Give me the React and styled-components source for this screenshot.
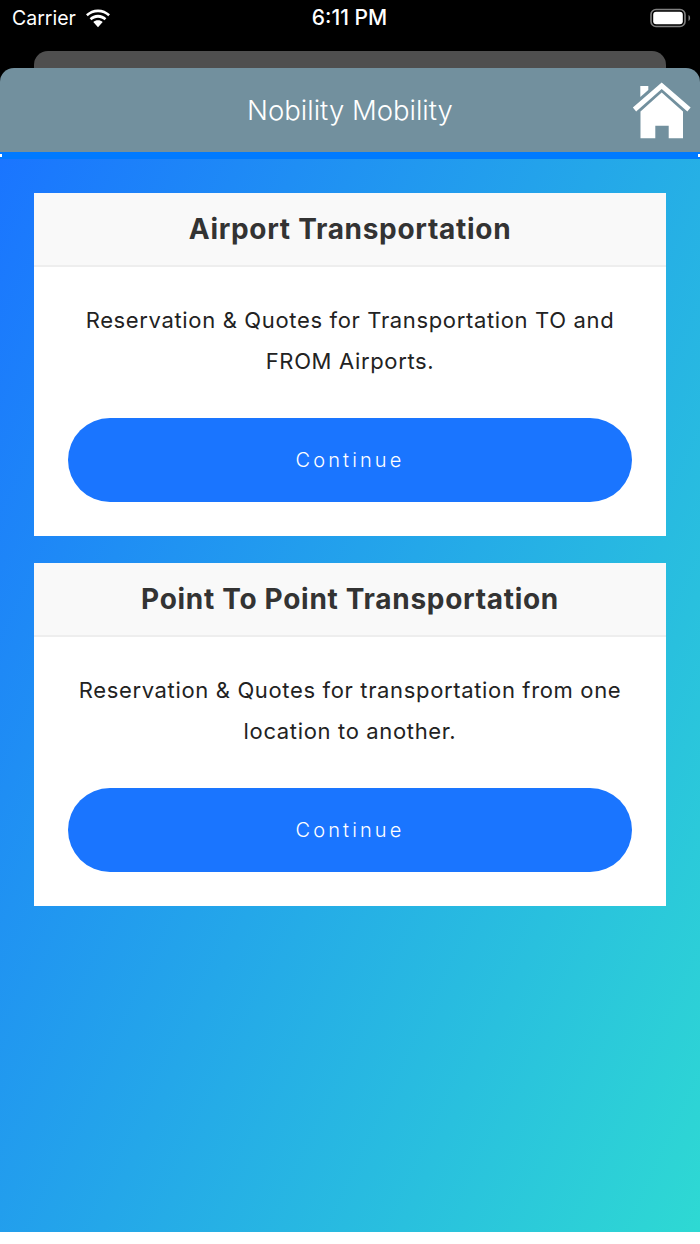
import React from "react";
import styled, { createGlobalStyle } from "styled-components";

const GlobalStyle = createGlobalStyle`
  html, body {
    margin: 0;
    padding: 0;
    background: #fff;
  }
  * {
    box-sizing: border-box;
  }
`;

const Phone = styled.div`
  width: 700px;
  height: 1232px;
  display: flex;
  flex-direction: column;
  background: #000;
  overflow: hidden;
`;

const StatusBar = styled.div`
  height: 51px;
  flex: none;
  display: grid;
  grid-template-columns: 1fr auto 1fr;
  align-items: start;
  padding: 6px 9px 0 12px;
  color: #fff;
  font-family: Inter, "Liberation Sans", sans-serif;
`;

const Carrier = styled.div`
  display: flex;
  align-items: center;
  gap: 9px;
  font-size: 19.5px;
  line-height: 24px;
`;

const Clock = styled.div`
  font-size: 21px;
  font-weight: 500;
  line-height: 24px;
  margin-right: 4px;
`;

const Battery = styled.div`
  justify-self: end;
  display: flex;
  height: 24px;
  align-items: center;
`;

const BackSheet = styled.div`
  height: 17px;
  flex: none;
  margin: 0 34px;
  background: #4f4f4f;
  border-radius: 14px 14px 0 0;
`;

const NavBar = styled.header`
  height: 84px;
  flex: none;
  position: relative;
  display: flex;
  align-items: center;
  justify-content: center;
  background: #72909e;
  border-radius: 14px 14px 0 0;
  color: #fff;
  font-family: Inter, "Liberation Sans", sans-serif;
  font-size: 27.5px;
  font-weight: 300;
`;

const HomeButton = styled.div`
  position: absolute;
  right: 8px;
  top: 14px;
  line-height: 0;
`;

const Strip = styled.div`
  height: 7px;
  flex: none;
  position: relative;
  background: #007aff;

  &::before,
  &::after {
    content: "";
    position: absolute;
    top: 2px;
    width: 2px;
    height: 3px;
    background: #fff;
  }
  &::before {
    left: 0;
  }
  &::after {
    right: 0;
  }
`;

const Content = styled.main`
  flex: 1;
  display: flex;
  flex-direction: column;
  gap: 27px;
  padding: 34px 34px 0;
  background: linear-gradient(115deg, #1a75ff 0%, #2ed9d3 100%);
`;

const Card = styled.section`
  background: #fff;
  font-family: Inter, "Noto Sans", sans-serif;
`;

const CardHeader = styled.div`
  height: 74px;
  display: flex;
  align-items: center;
  justify-content: center;
  background: #f9f9f9;
  border-bottom: 2px solid #eeeeee;
  color: #333;
  font-size: 28px;
  font-weight: 700;
  letter-spacing: 0.7px;
`;

const CardBody = styled.div`
  padding: 33px 34px 34px;
  display: flex;
  flex-direction: column;
  align-items: center;
`;

const CardText = styled.p`
  margin: 0 -20px 36px;
  text-align: center;
  font-size: 22px;
  line-height: 41px;
  letter-spacing: 0.65px;
  color: #222;
  white-space: pre-line;
`;

const ContinueButton = styled.button`
  width: 100%;
  height: 84px;
  border: 0;
  border-radius: 42px;
  background: #1a75ff;
  color: #fff;
  font-family: inherit;
  font-size: 20px;
  font-weight: 300;
  letter-spacing: 3.1px;
`;

const WifiIcon = () => (
  <svg width="26" height="19" viewBox="0 0 26 19.800">
    <path d="M13 3.400c4.200 0 8 1.600 10.700 4.200l1.800-2C22.200 2.400 17.800.4 13 .4S3.800 2.400.5 5.600l1.800 2C5 5 8.800 3.400 13 3.400z" fill="#fff" />
    <path d="M13 9c2.600 0 5 1 6.800 2.600l1.900-2C19.400 7.400 16.400 6 13 6S6.600 7.400 4.300 9.600l1.900 2C8 10 10.400 9 13 9z" fill="#fff" />
    <path d="M13 11.700c-1.900 0-3.600.7-4.900 1.900L13 19l4.900-5.400c-1.300-1.200-3-1.900-4.900-1.900z" fill="#fff" />
  </svg>
);

const BatteryIcon = () => (
  <svg width="42" height="20" viewBox="0 0 42 20">
    <rect x="2" y="1.500" width="34" height="17" rx="5" fill="none" stroke="#808080" strokeWidth="1.600" />
    <rect x="4.200" y="3.800" width="29.600" height="12.400" rx="3" fill="#fff" />
    <path d="M39.500 7v6c1-.4 1.600-1.600 1.600-3s-.6-2.600-1.600-3z" fill="#808080" />
  </svg>
);

const HomeIcon = () => (
  <svg width="60" height="58" viewBox="0 0 60 58">
    <path d="M8.500 29.500L29.700 10.500 51 29.500V56.300H36.700V43.700H23.300V56.300H8.500z" fill="#fff" />
    <path d="M8.300 4H16.300V8L8.300 15z" fill="#fff" />
    <path d="M2.500 27.500L29.700 3.700 57 27.500" fill="none" stroke="#fff" strokeWidth="5" />
  </svg>
);

const cards = [
  {
    title: "Airport Transportation",
    text: "Reservation & Quotes for Transportation TO and\nFROM Airports.",
  },
  {
    title: "Point To Point Transportation",
    text: "Reservation & Quotes for transportation from one\nlocation to another.",
  },
];

export default function App() {
  return (
    <>
      <GlobalStyle />
      <Phone>
        <StatusBar>
          <Carrier>
            Carrier
            <WifiIcon />
          </Carrier>
          <Clock>6:11 PM</Clock>
          <Battery>
            <BatteryIcon />
          </Battery>
        </StatusBar>
        <BackSheet />
        <NavBar>
          Nobility Mobility
          <HomeButton>
            <HomeIcon />
          </HomeButton>
        </NavBar>
        <Strip />
        <Content>
          {cards.map((card) => (
            <Card key={card.title}>
              <CardHeader>{card.title}</CardHeader>
              <CardBody>
                <CardText>{card.text}</CardText>
                <ContinueButton>Continue</ContinueButton>
              </CardBody>
            </Card>
          ))}
        </Content>
      </Phone>
    </>
  );
}
